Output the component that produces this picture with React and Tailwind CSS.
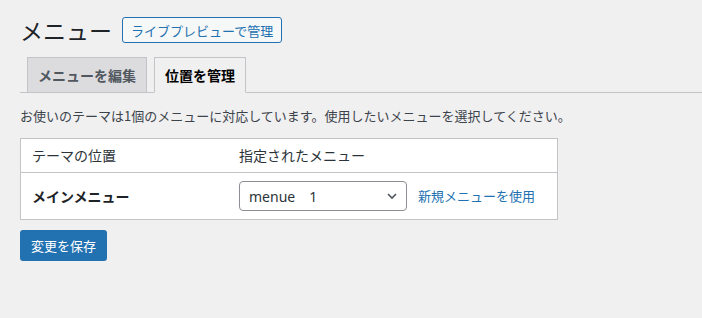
import React from "react";

const jp = { fontFamily: '"Noto Sans CJK JP", "Noto Sans", sans-serif' };

export default function App() {
  return (
    <div
      className="min-h-[318px] w-[702px] bg-[#f0f0f1] pl-[20px] pt-[17px] text-[13px] text-[#3c434a]"
      style={jp}
    >
      <div className="flex h-[26px] items-center">
        <h1 className="text-[23px] font-normal leading-[30px] text-[#1d2327]">メニュー</h1>
        <button className="ml-[10px] flex h-[26px] items-center rounded-[3px] border border-[#2271b1] bg-[#f6f7f7] px-[8px] text-[13px] leading-none text-[#2271b1]">
          ライブプレビューで管理
        </button>
      </div>

      <div className="mt-[14px] flex border-b border-[#c3c4c7] pl-[7px]">
        <div className="-mb-px flex h-[36px] items-center border border-[#c3c4c7] bg-[#dcdcde] px-[10px] text-[14px] font-semibold text-[#50575e]">
          メニューを編集
        </div>
        <div className="-mb-px ml-[7px] flex h-[36px] items-center border border-[#c3c4c7] border-b-[#f0f0f1] bg-[#f0f0f1] px-[10px] text-[14px] font-semibold text-[#000]">
          位置を管理
        </div>
      </div>

      <p className="mt-[13px] text-[13px] leading-[20px] text-[#3c434a]">
        お使いのテーマは1個のメニューに対応しています。使用したいメニューを選択してください。
      </p>

      <div className="mt-[12px] w-[538px] border border-[#c3c4c7] bg-white">
        <div className="flex h-[34px] items-center border-b border-[#c3c4c7] text-[14px] text-[#2c3338]">
          <div className="w-[218px] pl-[11px]">テーマの位置</div>
          <div>指定されたメニュー</div>
        </div>
        <div className="flex h-[46px] items-center">
          <div className="w-[218px] pl-[11px] text-[14px] font-semibold text-[#1d2327]">メインメニュー</div>
          <div className="flex h-[30px] w-[168px] items-center justify-between rounded-[4px] border border-[#8c8f94] bg-white pl-[9px] pr-[6px] text-[14px] text-[#2c3338]">
            <span style={{ fontFamily: '"Noto Sans", "Noto Sans CJK JP", sans-serif' }}>menue　1</span>
            <svg width="12" height="12" viewBox="0 0 12 12" className="mr-[2px]">
              <path d="M2 4l4 4 4-4" fill="none" stroke="#50575e" strokeWidth="1.6" />
            </svg>
          </div>
          <a className="ml-[11px] text-[13px] text-[#2271b1]">新規メニューを使用</a>
        </div>
      </div>

      <button className="mt-[10px] flex h-[31px] items-center rounded-[3px] bg-[#2271b1] px-[11px] text-[13px] text-white">
        変更を保存
      </button>
    </div>
  );
}
